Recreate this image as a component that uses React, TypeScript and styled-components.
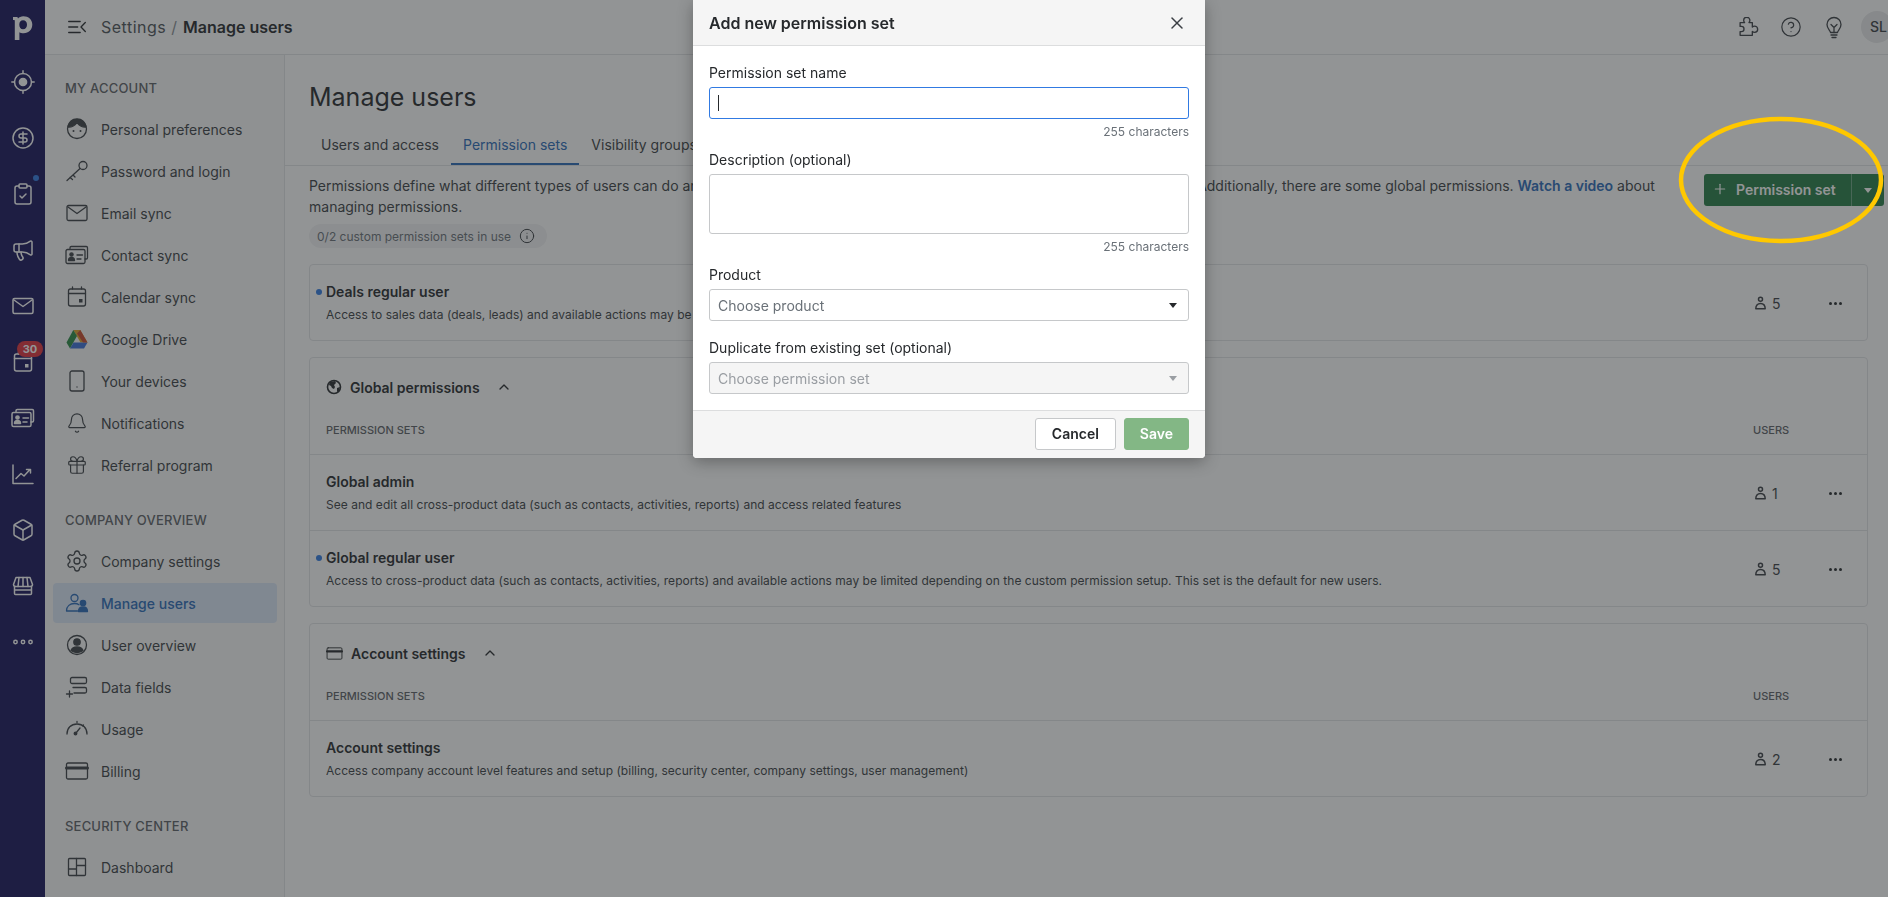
import React from "react";
import styled, { createGlobalStyle } from "styled-components";
import { Box, ChevronUp, CircleDollarSign, ClipboardCheck, Megaphone, Plus, Settings, Smartphone, Bell, Gift, X, CircleHelp, Info } from "lucide-react";

const GlobalStyle = createGlobalStyle`
  html, body { margin: 0; height: 100%; overflow: hidden; background: #fff; }
  body { font-family: Inter, "Liberation Sans", sans-serif; color: #26292c; font-size: 14px; }
  * { font-family: Inter, "Liberation Sans", sans-serif; }
`;

const Shell = styled.div`
  display: flex;
  width: 1888px;
  height: 897px;
  overflow: hidden;
`;

const Nav = styled.nav`
  flex: 0 0 45px;
  display: flex;
  flex-direction: column;
  align-items: center;
  background: #16125a;
  color: #fff;

  svg {
    stroke-width: 1.5;
  }
`;

const NavItem = styled.div`
  position: relative;
  width: 45px;
  height: 56px;
  display: flex;
  align-items: center;
  justify-content: center;
  flex: none;
`;

const LogoItem = styled(NavItem)`
  height: 54px;
`;

const NavBadge = styled.span`
  position: absolute;
  left: 17px;
  top: 7px;
  width: 26px;
  height: 16px;
  border-radius: 8px;
  background: #e0303a;
  color: #fff;
  font-size: 11px;
  font-weight: 700;
  line-height: 16px;
  text-align: center;
`;

const NavDot = styled.span`
  position: absolute;
  left: 33px;
  top: 9px;
  width: 6px;
  height: 6px;
  border-radius: 50%;
  background: #317ae2;
`;

const Column = styled.div`
  flex: 1;
  min-width: 0;
  display: flex;
  flex-direction: column;
`;

const TopBar = styled.header`
  flex: 0 0 54px;
  display: flex;
  align-items: center;
  border-bottom: 1px solid #e3e4e6;
  padding-left: 20px;
  background: #fff;
`;

const Crumb = styled.span<{ $strong?: boolean }>`
  font-size: 16px;
  line-height: 24px;
  font-weight: ${(p) => (p.$strong ? 600 : 400)};
  letter-spacing: ${(p) => (p.$strong ? "0" : "0.5px")};
  color: ${(p) => (p.$strong ? "#26292c" : "#4d5257")};
`;

const CrumbRoot = styled(Crumb)`
  margin-left: 12px;
`;

const Slash = styled.span`
  font-size: 16px;
  color: #8a8f94;
  margin: 0 6px 0 5px;
`;

const TopIcons = styled.div`
  margin-left: auto;
  display: flex;
  align-items: center;
  gap: 21px;
  color: #3b3f44;
`;

const Avatar = styled.div`
  width: 32px;
  height: 32px;
  margin-left: -5px;
  margin-right: -5px;
  border-radius: 50%;
  background: #e8e9ea;
  color: #3b3f44;
  font-size: 14px;
  font-weight: 500;
  line-height: 32px;
  padding-left: 9px;
  box-sizing: border-box;
`;

const Body = styled.div`
  flex: 1;
  display: flex;
  min-height: 0;
`;

const Sidebar = styled.aside`
  flex: 0 0 240px;
  box-sizing: border-box;
  border-right: 1px solid #e3e4e6;
  padding: 23px 7px 0 8px;
  background: #f9f9f9;
`;

const SectionTitle = styled.div<{ $first?: boolean }>`
  margin: ${(p) => (p.$first ? "0" : "25px")} 0 11px 12px;
  height: 20px;
  line-height: 20px;
  font-size: 13px;
  font-weight: 500;
  letter-spacing: 0.2px;
  color: #5d6166;
`;

const SideItem = styled.div<{ $active?: boolean }>`
  display: flex;
  align-items: center;
  gap: 12px;
  height: 40px;
  margin-bottom: 2px;
  padding-left: 12px;
  border-radius: 4px;
  font-size: 14px;
  color: ${(p) => (p.$active ? "#2a6ab8" : "#3b3f44")};
  font-weight: ${(p) => (p.$active ? 500 : 400)};
  background: ${(p) => (p.$active ? "#dbe6f7" : "transparent")};
`;

const SideIcon = styled.span`
  width: 24px;
  height: 24px;
  flex: none;
  display: flex;
  align-items: center;
  justify-content: center;
`;

const Main = styled.main`
  flex: 1;
  min-width: 0;
  padding: 26px 20px 0 24px;
`;

const Title = styled.h1`
  margin: 0 0 12px;
  font-size: 25px;
  line-height: 32px;
  font-weight: 400;
  color: #26292c;
`;

const Tabs = styled.div`
  display: flex;
  height: 40px;
  margin: 0 -20px 0 -24px;
  padding-left: 24px;
  border-bottom: 1px solid #e3e4e6;
`;

const Tab = styled.div<{ $active?: boolean }>`
  padding: 0 12px;
  line-height: 39px;
  height: 38px;
  font-size: 14px;
  color: ${(p) => (p.$active ? "#2a6ab8" : "#3b3f44")};
  border-bottom: ${(p) => (p.$active ? "2px solid #2a6ab8" : "none")};
`;

const IntroRow = styled.div`
  display: flex;
  align-items: flex-start;
  margin: 9px -16px 0 0;
`;

const Intro = styled.p`
  margin: 0;
  width: 1356px;
  font-size: 14px;
  line-height: 21px;
  color: #3b3f44;
`;

const VideoLink = styled.span`
  color: #2a6ab8;
  font-weight: 600;
`;

const SplitButton = styled.div`
  margin-left: auto;
  margin-top: -1px;
  width: 180px;
  height: 32px;
  display: flex;
  border-radius: 3px;
  overflow: hidden;
  background: #267c46;
  color: #fff;
  font-weight: 600;
  font-size: 14px;
`;

const SplitMain = styled.div`
  flex: 1;
  display: flex;
  align-items: center;
  gap: 8px;
  padding: 0 0 2px 8px;
  border-right: 1px solid #6aa583;
`;

const SplitCaret = styled.div`
  width: 32px;
  display: flex;
  align-items: center;
  justify-content: center;
`;

const Usage = styled.div`
  display: inline-flex;
  align-items: center;
  gap: 8px;
  height: 24px;
  margin-top: 7px;
  padding: 0 12px 0 8px;
  border-radius: 12px;
  background: #f3f3f4;
  color: #6a7178;
  font-size: 12px;
`;

const Card = styled.section`
  margin-top: 16px;
  border: 1px solid #e3e4e6;
  border-radius: 4px;
  background: #fff;
`;

const CardHead = styled.div`
  height: 58px;
  display: flex;
  align-items: center;
  padding-left: 16px;
  gap: 8px;
  font-size: 14px;
  font-weight: 600;
  color: #26292c;
`;

const Collapse = styled.span`
  margin-left: 8px;
  display: flex;
`;

const Columns = styled.div`
  display: grid;
  grid-template-columns: 1fr 66px 48px;
  height: 28px;
  padding: 0 0 10px 16px;
  align-items: center;
  font-size: 11px;
  font-weight: 500;
  color: #5d6166;
`;

const Row = styled.div<{ $divider?: boolean }>`
  position: relative;
  display: grid;
  grid-template-columns: 1fr 66px 32px 16px;
  height: 58px;
  padding: 17px 0 0 16px;
  border-top: ${(p) => (p.$divider ? "1px solid #e3e4e6" : "none")};
`;

const RowDot = styled.span`
  position: absolute;
  left: 6px;
  top: 24px;
  width: 6px;
  height: 6px;
  border-radius: 50%;
  background: #317ae2;
`;

const RowName = styled.div`
  font-size: 14px;
  line-height: 20px;
  font-weight: 600;
  color: #26292c;
`;

const RowDesc = styled.div`
  margin-top: 4px;
  font-size: 12px;
  line-height: 18px;
  letter-spacing: 0.03px;
  color: #3b3f44;
  white-space: nowrap;
  overflow: hidden;
`;

const UserCount = styled.div`
  display: flex;
  align-items: center;
  gap: 6px;
  height: 20px;
  margin-top: 11px;
  padding-left: 2px;
  font-size: 14px;
  color: #3b3f44;
`;

const More = styled.div`
  height: 20px;
  margin-top: 11px;
  display: flex;
  justify-content: center;
  align-items: center;
  gap: 2px;
`;

const MoreDot = styled.i`
  width: 3px;
  height: 3px;
  border-radius: 50%;
  background: #26292c;
`;

const Overlay = styled.div`
  position: fixed;
  inset: 0;
  background: rgba(38, 41, 44, 0.5);
`;

const Annotation = styled.svg`
  position: fixed;
  left: 1678px;
  top: 115px;
`;

const Modal = styled.div`
  position: fixed;
  left: 693px;
  top: 0;
  width: 512px;
  background: #fff;
  border-radius: 0 0 4px 4px;
  box-shadow: 0 4px 16px rgba(0, 0, 0, 0.3);
  overflow: hidden;
`;

const ModalHead = styled.div`
  height: 45px;
  display: flex;
  align-items: center;
  justify-content: space-between;
  padding: 0 18px 0 16px;
  background: #f5f5f5;
  border-bottom: 1px solid #dcddde;
  font-size: 16px;
  font-weight: 600;
  color: #26292c;
`;

const ModalBody = styled.div`
  padding: 17px 16px 0;
`;

const Label = styled.div`
  font-size: 14px;
  line-height: 20px;
  margin-bottom: 4px;
  color: #26292c;
`;

const Control = styled.div<{ $focus?: boolean; $disabled?: boolean; $tall?: boolean }>`
  box-sizing: border-box;
  height: ${(p) => (p.$tall ? "60px" : "32px")};
  display: flex;
  align-items: center;
  justify-content: space-between;
  padding: 0 8px;
  border: 1px solid ${(p) => (p.$focus ? "#317ae2" : "#c6c8ca")};
  border-radius: 3px;
  background: ${(p) => (p.$disabled ? "#f5f5f5" : "#fff")};
  color: ${(p) => (p.$disabled ? "#9a9ea3" : "#6a7178")};
  font-size: 14px;
`;

const Cursor = styled.span`
  width: 1px;
  height: 16px;
  background: #26292c;
`;

const Caret = styled.span<{ $muted?: boolean }>`
  width: 0;
  height: 0;
  margin-right: 3px;
  border-left: 4px solid transparent;
  border-right: 4px solid transparent;
  border-top: 5px solid ${(p) => (p.$muted ? "#9a9ea3" : "#26292c")};
`;

const WhiteCaret = styled.span`
  width: 0;
  height: 0;
  border-left: 4px solid transparent;
  border-right: 4px solid transparent;
  border-top: 5px solid #fff;
`;

const Helper = styled.div`
  margin: 4px 0 9px;
  font-size: 12px;
  line-height: 18px;
  text-align: right;
  color: #6a7178;
`;

const Gap = styled.div<{ $size: number }>`
  height: ${(p) => p.$size}px;
`;

const ModalFoot = styled.div`
  display: flex;
  justify-content: flex-end;
  gap: 8px;
  padding: 7px 16px 8px;
  background: #f5f5f5;
  border-top: 1px solid #dcddde;
`;

const Button = styled.div<{ $primary?: boolean }>`
  box-sizing: border-box;
  height: 32px;
  line-height: 30px;
  padding: 0 ${(p) => (p.$primary ? "15px" : "16px")};
  border: 1px solid ${(p) => (p.$primary ? "#83b785" : "#c6c8ca")};
  border-radius: 3px;
  background: ${(p) => (p.$primary ? "#83b785" : "#fff")};
  color: ${(p) => (p.$primary ? "#fff" : "#26292c")};
  font-size: 14px;
  font-weight: 600;
`;

const Line = styled.svg.attrs({ fill: "none", stroke: "currentColor", strokeWidth: 1.3, strokeLinecap: "round", strokeLinejoin: "round", viewBox: "0 0 24 24" })``;

type IconProps = { size?: number };

const Logo = () => (
  <svg width="20" height="25" viewBox="0 0 20 25" fill="#fff">
    <path fillRule="evenodd" d="M0 2h4.400l.6 1.600C6.200 2.200 8 1.300 10.300 1.300c5.300 0 9 3.300 9 8.300 0 5-3.500 8.700-8.700 8.700-1.700 0-3.200-.4-4.200-1.100V25H1.800V5.600c0-.5-.3-.7-.7-.7H0V2zm10 3.200c-2.300 0-3.700 1.700-3.700 4.500 0 2.700 1.400 4.600 3.700 4.600 2.500 0 4-1.900 4-4.600 0-2.800-1.500-4.500-4-4.500z" />
  </svg>
);

const Target = ({ size = 24 }: IconProps) => (
  <Line width={size} height={size}>
    <circle cx="12" cy="12" r="8.500" />
    <circle cx="12" cy="12" r="3.600" fill="currentColor" />
    <path d="M12 .8v2.700M12 20.500v2.700M.8 12h2.700M20.500 12h2.700" />
  </Line>
);

const Mail = ({ size = 24 }: IconProps) => (
  <Line width={size} height={size}>
    <rect x="2" y="4.500" width="20" height="15" rx="1.500" />
    <path d="M3 6l9 6.500L21 6" />
  </Line>
);

const Calendar = ({ size = 24 }: IconProps) => (
  <Line width={size} height={size}>
    <rect x="3.500" y="4" width="17" height="17" rx="2" />
    <path d="M3.500 8.500h17M7.500 2v2M16.500 2v2" />
    <rect x="14" y="14" width="3.500" height="3.500" fill="currentColor" stroke="none" />
  </Line>
);

const ContactCards = ({ size = 24 }: IconProps) => (
  <Line width={size} height={size}>
    <path d="M5 5.500V4.800C5 4 5.600 3.500 6.300 3.500h15c.700 0 1.200.5 1.200 1.300v10c0 .7-.5 1.200-1.200 1.200H20" />
    <rect x="1" y="6.500" width="19" height="14" rx="1.500" />
    <circle cx="6.500" cy="11.500" r="1.600" fill="currentColor" />
    <path d="M3.500 17.500c0-2 1.300-3 3-3s3 1 3 3z" fill="currentColor" />
    <path d="M12 12h5.500M12 16h4" />
  </Line>
);

const Chart = ({ size = 24 }: IconProps) => (
  <Line width={size} height={size}>
    <path d="M2 3v18.500h20" />
    <path d="M5 16.500l5-5 3 2.500 6-6.500M15.500 7.500H19.500V11" />
  </Line>
);

const Store = ({ size = 24 }: IconProps) => (
  <Line width={size} height={size}>
    <path d="M5 3.500h14l2.500 7c0 1.500-1.200 2-2.500 2H5c-1.300 0-2.500-.5-2.500-2z" />
    <path d="M8 3.500l-1 9M12 3.500v9M16 3.500l1 9" />
    <path d="M3.500 12.500v7c0 .6.400 1 1 1h15c.6 0 1-.4 1-1v-7M3.500 16h17" />
  </Line>
);

const NavDots = () => (
  <Line width={24} height={24}>
    <circle cx="4.500" cy="12" r="1.700" />
    <circle cx="12" cy="12" r="1.700" />
    <circle cx="19.500" cy="12" r="1.700" />
  </Line>
);

const MenuToggle = () => (
  <svg width="18" height="14" viewBox="0 0 18 14" fill="none" stroke="currentColor" strokeWidth="1.300" strokeLinecap="round" strokeLinejoin="round">
    <path d="M.7 1.500h11.500M.7 7h9M.7 12.500h11.500M17.300 2.500L13 7l4.300 4.500" />
  </svg>
);

const PuzzlePiece = () => (
  <svg width="20" height="20" viewBox="0 0 18 18" fill="none" stroke="currentColor" strokeWidth="1.200" strokeLinejoin="round">
    <path d="M1 16.500H12V13c.5.5 1.200.8 2 .8a2.800 2.800 0 0 0 0-5.600c-.8 0-1.500.3-2 .8V5H9c.5-.5.8-1.200.8-2a2.800 2.800 0 0 0-5.600 0c0 .8.3 1.500.8 2H1v3.500h1.200a2.300 2.300 0 0 1 0 4.600H1z" />
  </svg>
);

const Bulb = () => (
  <svg width="22" height="24" viewBox="0 0 22 24" fill="none" stroke="currentColor" strokeWidth="1.300" strokeLinecap="round" strokeLinejoin="round">
    <path d="M7.500 17.500c0-2-3.500-3.700-3.500-8a7 7 0 0 1 14 0c0 4.300-3.500 6-3.500 8z" />
    <path d="M8 9.500l3 3 3-3M11 12.500v5M8 20h6M9 22.500h4" />
  </svg>
);

const Face = () => (
  <Line width={24} height={24}>
    <circle cx="12" cy="12" r="9.500" />
    <path d="M3 10c3 .5 7-1 9-4.500 2 3.500 6 5 9 4.500-1-5-4-8-9-8s-8 3-9 8z" fill="currentColor" />
    <circle cx="8.500" cy="14" r="1" fill="currentColor" stroke="none" />
    <circle cx="15.500" cy="14" r="1" fill="currentColor" stroke="none" />
  </Line>
);

const Key = () => (
  <Line width={24} height={24}>
    <circle cx="18" cy="6.500" r="4" />
    <path d="M15 9.500L2 21.500M5 18.500l2.500 2M8 16l2 2" />
  </Line>
);

const Drive = () => (
  <svg width="22" height="20" viewBox="0 0 22 20">
    <path d="M7.300 1h7l7.200 12.500h-7z" fill="#e0a32b" />
    <path d="M7.300 1L.5 13.500l3.500 6 7-12.500z" fill="#2a8a45" />
    <path d="M4 19.500h14l3.500-6h-14z" fill="#3a6fd8" />
    <path d="M14.300 1l7.200 12.500H17L11 4.500z" fill="#c9492f" />
  </svg>
);

const Users = () => (
  <Line width={24} height={24}>
    <circle cx="9.500" cy="7" r="3.500" />
    <path d="M1.500 20c0-5 3.500-7.500 8-7.500 2 0 3.500.5 4.500 1.200M1.500 20h11" />
    <circle cx="18" cy="12" r="2.700" fill="currentColor" />
    <path d="M13.500 20.500c0-3 2-4.500 4.500-4.500s4.500 1.500 4.500 4.500z" fill="currentColor" />
  </Line>
);

const UserCircle = () => (
  <Line width={24} height={24}>
    <circle cx="12" cy="12" r="9.500" />
    <circle cx="12" cy="9" r="3.200" fill="currentColor" />
    <path d="M6 17.500c1-2.500 3.500-3.500 6-3.500s5 1 6 3.500c-1.500 1.200-3.500 2-6 2s-4.500-.8-6-2z" fill="currentColor" />
  </Line>
);

const DataFields = () => (
  <Line width={24} height={24}>
    <rect x="5.500" y="2.500" width="16" height="6" rx="1.500" />
    <path d="M8 12.500h12c1 0 1.500.5 1.500 1.500v2.500c0 1-.5 1.500-1.500 1.500H9" />
    <path d="M1.500 19h6M4.500 16v6" />
  </Line>
);

const Gauge = () => (
  <Line width={24} height={24}>
    <path d="M2 17c0-6 4-10 10-10s10 4 10 10" />
    <path d="M11 16l4-5" />
    <circle cx="10.500" cy="16.500" r="1.300" fill="currentColor" />
    <path d="M12 4.500v1M18.500 8l-.7.7" />
  </Line>
);

const CardIcon = ({ size = 24 }: IconProps) => (
  <Line width={size} height={size}>
    <rect x="1.500" y="4" width="21" height="16" rx="1.500" />
    <path d="M1.500 9h21" strokeWidth="3" />
  </Line>
);

const Dashboard = () => (
  <Line width={24} height={24}>
    <rect x="3.500" y="3.500" width="17" height="17" rx="1" />
    <path d="M11.500 3.500v17M11.500 10.500h9M3.500 14h8" />
  </Line>
);

const Globe = () => (
  <svg width="16" height="16" viewBox="0 0 16 16">
    <circle cx="8" cy="8" r="6.500" fill="none" stroke="currentColor" strokeWidth="1.600" />
    <path d="M4 3l5-1 1 2-2 2 1 2-1 2-2-1-1-2-2-1zM11 9l3-1-1 4-2 1z" fill="currentColor" />
  </svg>
);

const Person = () => (
  <svg width="11" height="14" viewBox="0 0 11 14" fill="none" stroke="currentColor" strokeWidth="1.500" strokeLinejoin="round">
    <circle cx="5.500" cy="3.200" r="2" />
    <path d="M.8 12.800c0-3.600 2-5.300 4.700-5.300s4.700 1.700 4.700 5.300z" />
  </svg>
);

const navIcons = [
  <Target key="target" />,
  <CircleDollarSign key="deals" size={24} />,
  <ClipboardCheck key="tasks" size={24} />,
  <Megaphone key="campaigns" size={24} />,
  <Mail key="mail" />,
  <Calendar key="calendar" />,
  <ContactCards key="contacts" />,
  <Chart key="chart" />,
  <Box key="box" size={24} />,
  <Store key="store" />,
  <NavDots key="dots" />,
];

const accountItems: [React.ReactNode, string][] = [
  [<Face />, "Personal preferences"],
  [<Key />, "Password and login"],
  [<Mail />, "Email sync"],
  [<ContactCards />, "Contact sync"],
  [<Calendar />, "Calendar sync"],
  [<Drive />, "Google Drive"],
  [<Smartphone size={24} strokeWidth={1.3} />, "Your devices"],
  [<Bell size={22} strokeWidth={1.3} />, "Notifications"],
  [<Gift size={22} strokeWidth={1.3} />, "Referral program"],
];

const companyItems: [React.ReactNode, string][] = [
  [<Settings size={24} strokeWidth={1.3} />, "Company settings"],
  [<Users />, "Manage users"],
  [<UserCircle />, "User overview"],
  [<DataFields />, "Data fields"],
  [<Gauge />, "Usage"],
  [<CardIcon />, "Billing"],
];

type PermissionRowProps = { name: string; desc: string; users: number; isDefault?: boolean; divider?: boolean };

const PermissionRow = ({ name, desc, users, isDefault, divider }: PermissionRowProps) => (
  <Row $divider={divider}>
    {isDefault && <RowDot />}
    <div>
      <RowName>{name}</RowName>
      <RowDesc>{desc}</RowDesc>
    </div>
    <UserCount>
      <Person />
      {users}
    </UserCount>
    <More>
      <MoreDot />
      <MoreDot />
      <MoreDot />
    </More>
  </Row>
);

const App = () => {
  return (
    <>
      <GlobalStyle />
      <Shell>
        <Nav>
          <LogoItem>
            <Logo />
          </LogoItem>
          {navIcons.map((icon, i) => (
            <NavItem key={i}>
              {icon}
              {i === 2 && <NavDot />}
              {i === 5 && <NavBadge>30</NavBadge>}
            </NavItem>
          ))}
        </Nav>
        <Column>
          <TopBar>
            <SideIcon>
              <MenuToggle />
            </SideIcon>
            <CrumbRoot>Settings</CrumbRoot>
            <Slash>/</Slash>
            <Crumb $strong>Manage users</Crumb>
            <TopIcons>
              <PuzzlePiece />
              <CircleHelp size={22} strokeWidth={1.3} />
              <Bulb />
              <Avatar>SL</Avatar>
            </TopIcons>
          </TopBar>
          <Body>
            <Sidebar>
              <SectionTitle $first>MY ACCOUNT</SectionTitle>
              {accountItems.map(([icon, label]) => (
                <SideItem key={label}>
                  <SideIcon>{icon}</SideIcon>
                  {label}
                </SideItem>
              ))}
              <SectionTitle>COMPANY OVERVIEW</SectionTitle>
              {companyItems.map(([icon, label]) => (
                <SideItem key={label} $active={label === "Manage users"}>
                  <SideIcon>{icon}</SideIcon>
                  {label}
                </SideItem>
              ))}
              <SectionTitle>SECURITY CENTER</SectionTitle>
              <SideItem>
                <SideIcon>
                  <Dashboard />
                </SideIcon>
                Dashboard
              </SideItem>
            </Sidebar>
            <Main>
              <Title>Manage users</Title>
              <Tabs>
                <Tab>Users and access</Tab>
                <Tab $active>Permission sets</Tab>
                <Tab>Visibility groups</Tab>
              </Tabs>
              <IntroRow>
                <Intro>
                  Permissions define what different types of users can do and see in the app. Each set controls access to data and features by product. Additionally, there are some global permissions. <VideoLink>Watch a video</VideoLink> about managing permissions.
                </Intro>
                <SplitButton>
                  <SplitMain>
                    <Plus size={16} strokeWidth={1.8} />
                    Permission set
                  </SplitMain>
                  <SplitCaret>
                    <WhiteCaret />
                  </SplitCaret>
                </SplitButton>
              </IntroRow>
              <Usage>
                0/2 custom permission sets in use
                <Info size={16} strokeWidth={1.5} color="#3b3f44" />
              </Usage>
              <Card>
                <PermissionRow
                  isDefault
                  name="Deals regular user"
                  desc="Access to sales data (deals, leads) and available actions may be limited depending on the custom permission setup."
                  users={5}
                />
              </Card>
              <Card>
                <CardHead>
                  <Globe />
                  Global permissions
                  <Collapse>
                    <ChevronUp size={16} strokeWidth={2} />
                  </Collapse>
                </CardHead>
                <Columns>
                  <span>PERMISSION SETS</span>
                  <span>USERS</span>
                </Columns>
                <PermissionRow
                  divider
                  name="Global admin"
                  desc="See and edit all cross-product data (such as contacts, activities, reports) and access related features"
                  users={1}
                />
                <PermissionRow
                  divider
                  isDefault
                  name="Global regular user"
                  desc="Access to cross-product data (such as contacts, activities, reports) and available actions may be limited depending on the custom permission setup. This set is the default for new users."
                  users={5}
                />
              </Card>
              <Card>
                <CardHead>
                  <CardIcon size={17} />
                  Account settings
                  <Collapse>
                    <ChevronUp size={16} strokeWidth={2} />
                  </Collapse>
                </CardHead>
                <Columns>
                  <span>PERMISSION SETS</span>
                  <span>USERS</span>
                </Columns>
                <PermissionRow
                  divider
                  name="Account settings"
                  desc="Access company account level features and setup (billing, security center, company settings, user management)"
                  users={2}
                />
              </Card>
            </Main>
          </Body>
        </Column>
      </Shell>
      <Overlay />
      <Annotation width="206" height="130" viewBox="0 0 206 130">
        <ellipse cx="103" cy="65" rx="100" ry="61" fill="none" stroke="#ffc800" strokeWidth="4.500" />
      </Annotation>
      <Modal>
        <ModalHead>
          Add new permission set
          <X size={20} strokeWidth={1.8} color="#3b3f44" />
        </ModalHead>
        <ModalBody>
          <Label>Permission set name</Label>
          <Control $focus>
            <Cursor />
          </Control>
          <Helper>255 characters</Helper>
          <Label>Description (optional)</Label>
          <Control $tall />
          <Helper>255 characters</Helper>
          <Label>Product</Label>
          <Control>
            Choose product
            <Caret />
          </Control>
          <Gap $size={17} />
          <Label>Duplicate from existing set (optional)</Label>
          <Control $disabled>
            Choose permission set
            <Caret $muted />
          </Control>
          <Gap $size={16} />
        </ModalBody>
        <ModalFoot>
          <Button>Cancel</Button>
          <Button $primary>Save</Button>
        </ModalFoot>
      </Modal>
    </>
  );
};

export default App;
